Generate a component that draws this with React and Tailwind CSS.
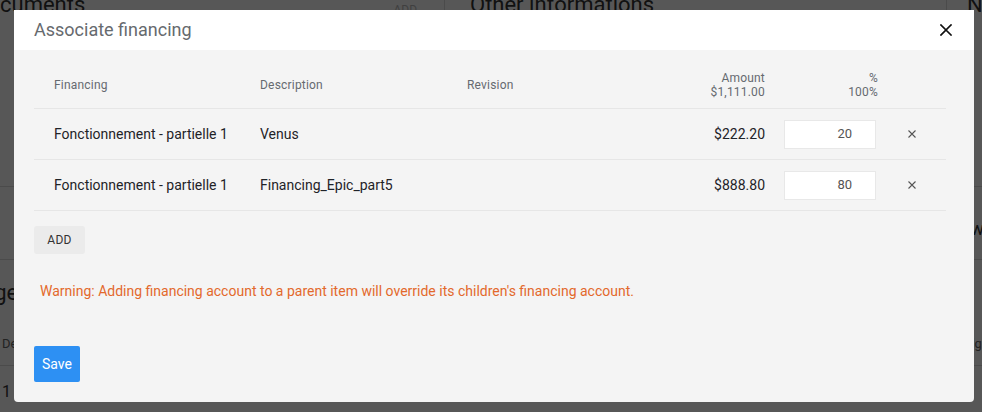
const rows = [
    { financing: 'Fonctionnement - partielle 1', description: 'Venus', amount: '$222.20', pct: '20' },
    { financing: 'Fonctionnement - partielle 1', description: 'Financing_Epic_part5', amount: '$888.80', pct: '80' },
]

const cols = 'grid grid-cols-[206px_207px_218px_100px_113px_68px]'

const Backdrop = () => {
    return (
        <div className="w-[982px] h-[412px] bg-white text-[#333] overflow-hidden">
            <div className="flex h-[187px] border-b border-[#ddd]">
                <div className="w-[445px] shrink-0 border-r border-[#ddd] flex justify-between items-start pr-[24px]">
                    <span className="text-[22px] leading-[26px] ml-[-27px] mt-[-8px]">Documents</span>
                    <span className="text-[12px] text-[#bbb] mt-[-3px] px-[3px] py-[4px]">ADD</span>
                </div>
                <div className="w-[502px] shrink-0 border-r border-[#ddd] pl-[25px]">
                    <span className="text-[22px] leading-[26px] block mt-[-8px] whitespace-nowrap">Other informations</span>
                </div>
                <div className="flex-1 min-w-0 pl-[20px] overflow-hidden">
                    <span className="text-[22px] leading-[26px] block mt-[-8px] whitespace-nowrap">Notes</span>
                </div>
            </div>
            <div className="flex h-[73px] border-b border-[#ddd]">
                <div className="flex-1" />
                <div className="w-[36px] pt-[28px] text-[18px] whitespace-nowrap overflow-hidden">Flow</div>
            </div>
            <div className="flex">
                <div className="flex-1">
                    <div className="text-[22px] h-[66px] pt-[16px] ml-[-44px]">Budget</div>
                    <div className="text-[13px] h-[40px] pt-[8px] pl-[2px] border-b border-[#ddd] text-[#666]">Description</div>
                    <div className="text-[16px] pt-[14px] pl-[2px]">1</div>
                </div>
                <div className="w-[36px] overflow-hidden">
                    <div className="h-[66px]" />
                    <div className="text-[13px] h-[40px] pt-[8px] pl-[6px] border-b border-[#ddd] text-[#666] whitespace-nowrap">Budget</div>
                    <div className="text-[14px] pt-[14px] pl-[8px] text-[#2d8cf0]">. t</div>
                </div>
            </div>
        </div>
    )
}

const CloseIcon = () => (
    <svg width="12" height="12" viewBox="0 0 12 12" fill="none" stroke="#111" strokeWidth="1.7" strokeLinecap="square">
        <path d="M1 1L11 11M11 1L1 11" />
    </svg>
)

const RemoveIcon = () => (
    <svg width="8" height="8" viewBox="0 0 8 8" fill="none" stroke="#555" strokeWidth="1.1">
        <path d="M0.5 0.5L7.5 7.5M7.5 0.5L0.5 7.5" />
    </svg>
)

const App = () => {
    return (
        <div className="relative w-[982px] h-[412px] overflow-hidden font-['Roboto',sans-serif]">
            <Backdrop />
            <div className="absolute inset-0 bg-black/[0.66] pl-[14px] pt-[10px]">
                <div className="w-[960px] h-[392px] rounded-b-[4px] overflow-hidden bg-[#f4f4f4] flex flex-col">
                    <div className="h-[40px] bg-white flex items-center justify-between pl-[20px] pr-[22px]">
                        <h2 className="text-[18px] text-[#666a6e] leading-none">Associate financing</h2>
                        <button className="w-[12px] h-[12px] flex items-center justify-center">
                            <CloseIcon />
                        </button>
                    </div>
                    <div className="px-[20px] pt-[21px] pb-[20px] flex flex-col flex-1">
                        <div className="w-[912px]">
                            <div className={`${cols} h-[38px] border-b border-[#e6e6e6] text-[12px] text-[#666a70] tracking-[0.2px]`}>
                                <div className="pl-[20px] leading-[28px]">Financing</div>
                                <div className="pl-[20px] leading-[28px]">Description</div>
                                <div className="pl-[20px] leading-[28px]">Revision</div>
                                <div className="text-right leading-[14px]">
                                    <div>Amount</div>
                                    <div>$1,111.00</div>
                                </div>
                                <div className="text-right leading-[14px]">
                                    <div>%</div>
                                    <div>100%</div>
                                </div>
                                <div />
                            </div>
                            {rows.map((r, i) => (
                                <div key={i} className={`${cols} h-[51px] items-center border-b border-[#e6e6e6] text-[14px] text-[#1f2328]`}>
                                    <div className="pl-[20px]">{r.financing}</div>
                                    <div className="pl-[20px]">{r.description}</div>
                                    <div className="pl-[20px]" />
                                    <div className="text-right">{r.amount}</div>
                                    <div className="flex justify-end pr-[2px]">
                                        <div className="w-[92px] h-[29px] bg-white border border-[#e8e8e8] flex items-center justify-end pr-[23px] text-[13px] text-[#555]">
                                            {r.pct}
                                        </div>
                                    </div>
                                    <div className="flex justify-center">
                                        <RemoveIcon />
                                    </div>
                                </div>
                            ))}
                        </div>
                        <button className="mt-[15px] w-[51px] h-[28px] rounded-[3px] bg-[#ebebeb] text-[12px] text-[#333] tracking-[0.3px]">ADD</button>
                        <p className="mt-[27px] pl-[6px] text-[14px] leading-[20px] text-[#e3692c]">
                            Warning: Adding financing account to a parent item will override its children's financing account.
                        </p>
                        <div className="mt-auto">
                            <button className="w-[46px] h-[36px] rounded-[2px] bg-[#2d90f3] text-white text-[14px]">Save</button>
                        </div>
                    </div>
                </div>
            </div>
        </div>
    )
}

export default App
